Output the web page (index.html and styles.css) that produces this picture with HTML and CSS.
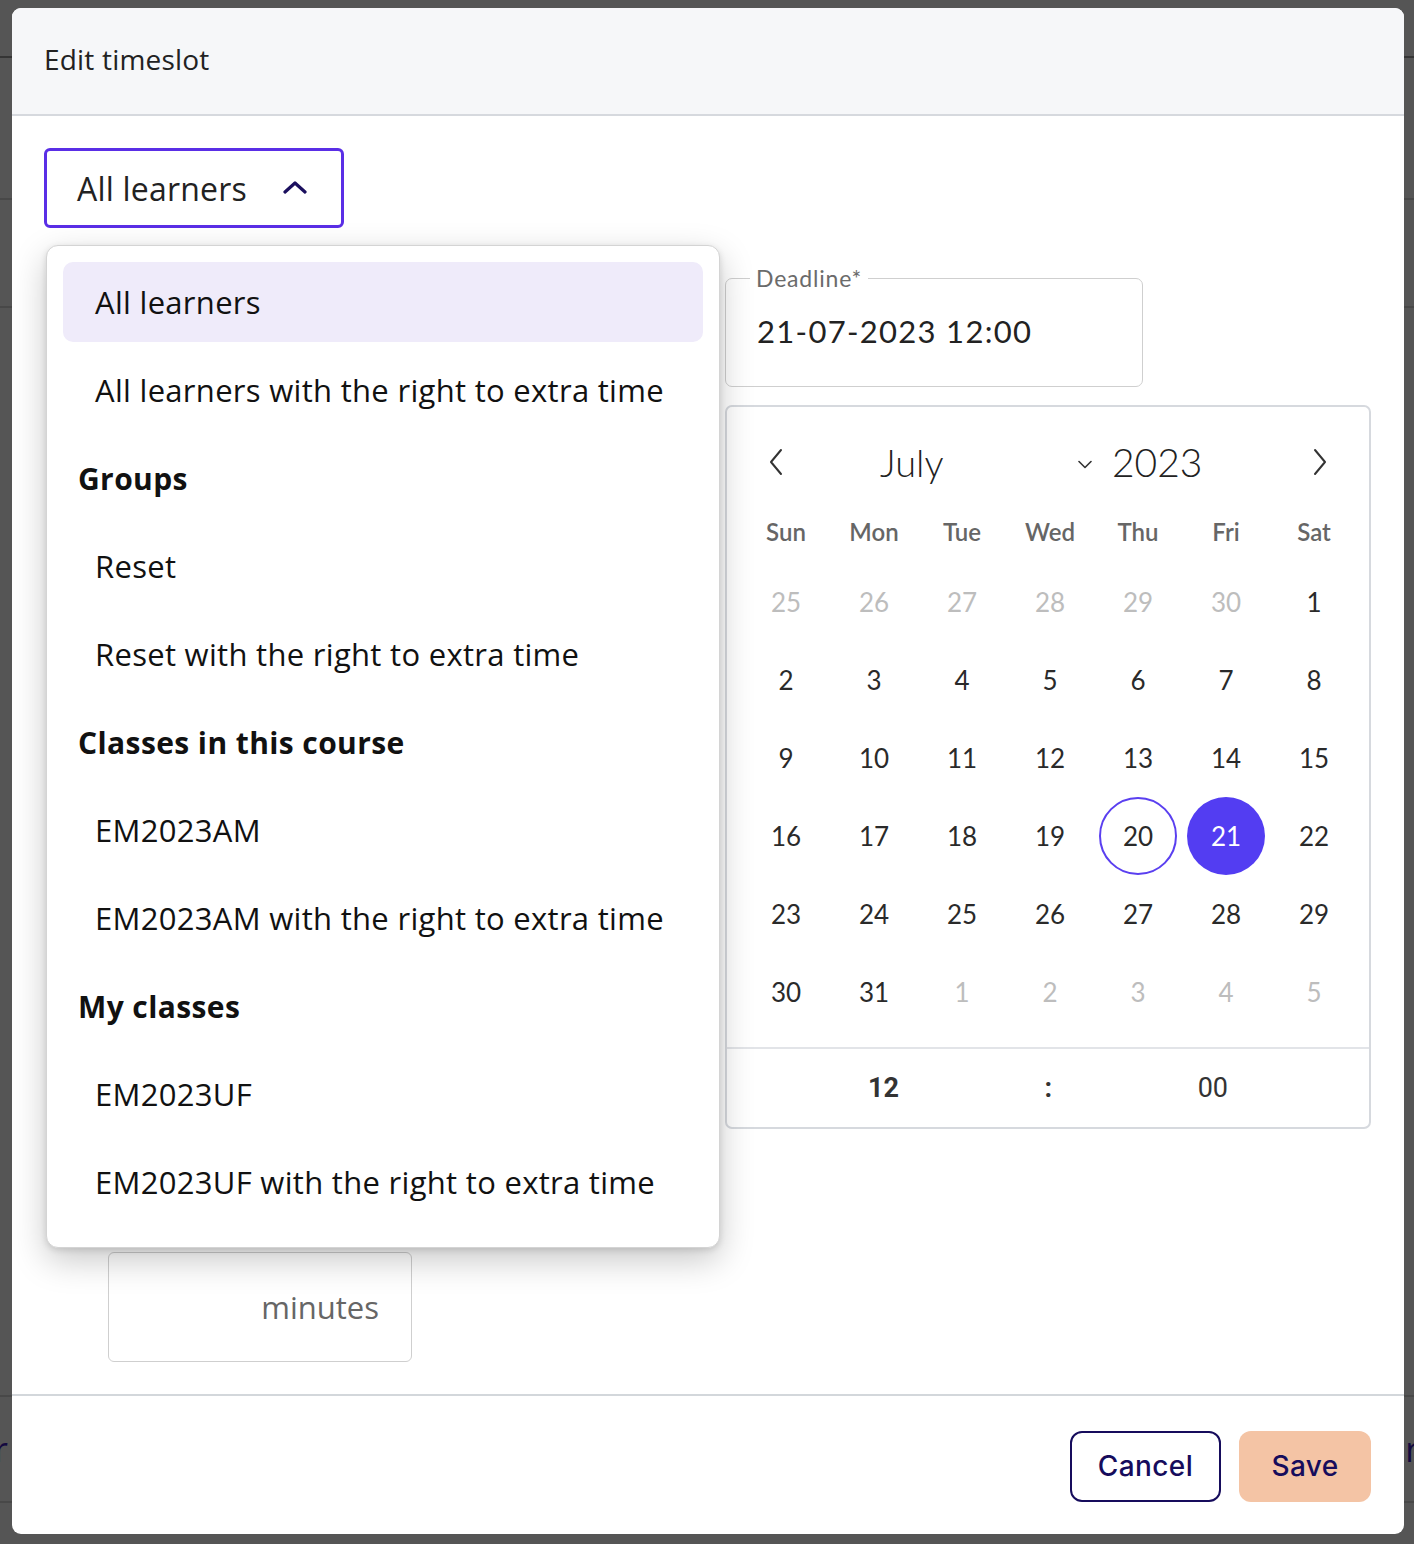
FILE: index.html
```html
<!DOCTYPE html>
<html lang="en">
<head>
<meta charset="utf-8">
<title>Edit timeslot</title>
<link rel="stylesheet" href="styles.css">
</head>
<body>
<div class="backdrop">
  <div class="bg-row bg-a"></div>
  <div class="bg-row bg-b"></div>
  <div class="bg-row bg-c"></div>
  <div class="bg-row bg-d"></div>
  <div class="bg-row bg-e"><span>r</span><span>n</span></div>
</div>

<div class="modal">
  <header class="modal-header">
    <h1>Edit timeslot</h1>
  </header>

  <section class="modal-body">
    <div class="select-wrap">
      <button class="select">
        <span>All learners</span>
        <svg class="chev-up" width="24" height="14" viewBox="0 0 24 14"><path d="M2 12 L12 3 L22 12" fill="none" stroke="#1b0f5e" stroke-width="3.2" stroke-linecap="round" stroke-linejoin="round"/></svg>
      </button>

      <ul class="menu">
        <li class="opt active">All learners</li>
        <li class="opt">All learners with the right to extra time</li>
        <li class="grp">Groups</li>
        <li class="opt">Reset</li>
        <li class="opt">Reset with the right to extra time</li>
        <li class="grp">Classes in this course</li>
        <li class="opt">EM2023AM</li>
        <li class="opt">EM2023AM with the right to extra time</li>
        <li class="grp">My classes</li>
        <li class="opt">EM2023UF</li>
        <li class="opt">EM2023UF with the right to extra time</li>
      </ul>
    </div>

    <div class="fields-row">
      <div class="field-col"></div>
      <div class="deadline-col">
        <fieldset class="outlined">
          <legend>Deadline*</legend>
          <div class="value">21-07-2023 12:00</div>
        </fieldset>

        <div class="calendar">
          <div class="cal-head">
            <svg class="nav" width="16" height="28" viewBox="0 0 16 28"><path d="M13 2 L3 14 L13 26" fill="none" stroke="#333" stroke-width="2" stroke-linecap="round" stroke-linejoin="round"/></svg>
            <div class="month">
              <span>July</span>
              <svg width="14" height="9" viewBox="0 0 14 9"><path d="M1 1.5 L7 7.5 L13 1.5" fill="none" stroke="#333" stroke-width="1.6" stroke-linecap="round" stroke-linejoin="round"/></svg>
            </div>
            <span class="year">2023</span>
            <span class="spacer"></span>
            <svg class="nav" width="16" height="28" viewBox="0 0 16 28"><path d="M3 2 L13 14 L3 26" fill="none" stroke="#333" stroke-width="2" stroke-linecap="round" stroke-linejoin="round"/></svg>
          </div>
          <div class="weekdays">
            <span>Sun</span><span>Mon</span><span>Tue</span><span>Wed</span><span>Thu</span><span>Fri</span><span>Sat</span>
          </div>
          <div class="days">
            <span class="muted">25</span><span class="muted">26</span><span class="muted">27</span><span class="muted">28</span><span class="muted">29</span><span class="muted">30</span><span>1</span>
            <span>2</span><span>3</span><span>4</span><span>5</span><span>6</span><span>7</span><span>8</span>
            <span>9</span><span>10</span><span>11</span><span>12</span><span>13</span><span>14</span><span>15</span>
            <span>16</span><span>17</span><span>18</span><span>19</span><span class="today">20</span><span class="selected">21</span><span>22</span>
            <span>23</span><span>24</span><span>25</span><span>26</span><span>27</span><span>28</span><span>29</span>
            <span>30</span><span>31</span><span class="muted">1</span><span class="muted">2</span><span class="muted">3</span><span class="muted">4</span><span class="muted">5</span>
          </div>
          <div class="time">
            <span class="hh">12</span>
            <span class="sep">:</span>
            <span class="mm">00</span>
          </div>
        </div>
      </div>
    </div>

    <div class="minutes-field">minutes</div>
  </section>

  <footer class="modal-footer">
    <button class="btn btn-outline">Cancel</button>
    <button class="btn btn-fill">Save</button>
  </footer>
</div>
</body>
</html>
```

FILE: styles.css
```css
* { box-sizing: border-box; }

html, body {
  margin: 0;
  padding: 0;
}

body {
  width: 1414px;
  height: 1544px;
  background: #555555;
  font-family: "Open Sans", "Noto Sans", sans-serif;
  color: #222;
  position: relative;
  overflow: hidden;
}

/* background page behind the overlay */
.backdrop {
  display: flex;
  flex-direction: column;
}
.bg-row { border-bottom: 2px solid #484848; }
.bg-a { height: 58px; border-bottom-color: #353535; }
.bg-b { height: 142px; }
.bg-c { height: 108px; }
.bg-d { height: 1089px; }
.bg-e {
  height: 106px;
  display: flex;
  justify-content: space-between;
  align-items: center;
  font-size: 34px;
  color: #14093f;
}
.bg-e span:first-child { margin-left: -6px; }
.bg-e span:last-child { margin-right: -12px; }

/* modal */
.modal {
  position: absolute;
  left: 12px;
  top: 8px;
  width: 1392px;
  height: 1526px;
  background: #fff;
  border-radius: 9px;
  display: flex;
  flex-direction: column;
  overflow: hidden;
}

.modal-header {
  height: 108px;
  background: #f6f7f9;
  border-bottom: 2px solid #d6d9de;
  display: flex;
  align-items: center;
  padding-left: 32px;
  padding-bottom: 4px;
}
.modal-header h1 {
  margin: 0;
  font-size: 28px;
  font-weight: 500;
  color: #222;
  letter-spacing: 0.2px;
}

.modal-body {
  flex: 1;
  padding: 32px 32px 0 32px;
  display: flex;
  flex-direction: column;
}

/* select */
.select-wrap { position: relative; z-index: 5; }

.select {
  width: 300px;
  height: 80px;
  border: 3px solid #5a2ee6;
  border-radius: 6px;
  background: #fff;
  display: flex;
  align-items: center;
  justify-content: space-between;
  padding: 0 34px 0 30px;
  font-family: inherit;
  font-size: 32px;
  letter-spacing: 0.2px;
  color: #222;
  cursor: pointer;
}
.select span { white-space: nowrap; }
.chev-up { margin-top: -2px; }

.menu {
  position: absolute;
  left: 2px;
  top: 97px;
  width: 674px;
  margin: 0;
  padding: 16px 16px 25px 16px;
  list-style: none;
  background: #fff;
  border: 1px solid #d4d4d4;
  border-radius: 12px;
  box-shadow: 0 12px 34px rgba(0, 0, 0, 0.22), 0 2px 6px rgba(0, 0, 0, 0.12);
  display: flex;
  flex-direction: column;
  gap: 8px;
}
.menu li {
  height: 80px;
  display: flex;
  align-items: center;
  white-space: nowrap;
  border-radius: 10px;
}
.opt {
  padding-left: 32px;
  font-size: 31px;
  letter-spacing: 0.3px;
  color: #111;
}
.opt.active { background: #efebfa; }
.grp {
  padding-left: 15px;
  font-size: 30px;
  font-weight: 700;
  letter-spacing: 0.4px;
  color: #111;
}

/* fields */
.fields-row {
  display: flex;
  margin-top: 49px;
}
.field-col { width: 681px; }
.deadline-col { position: relative; }

.outlined {
  width: 418px;
  height: 120px;
  margin: -10px 0 0 0;
  padding: 0 0 0 31px;
  border: 1.5px solid #cfcfcf;
  border-radius: 7px;
}
.outlined legend {
  margin-left: -7px;
  padding: 0 6px 0 6px;
  font-family: "Lato", sans-serif;
  font-size: 23px;
  color: #6b6b6b;
  line-height: 22px;
  letter-spacing: 0.8px;
}
.outlined .value {
  margin-top: 23px;
  font-family: "Lato", sans-serif;
  font-size: 31px;
  color: #222;
  letter-spacing: 1.3px;
}

/* calendar popover */
.calendar {
  position: absolute;
  left: 0;
  top: 128px;
  width: 646px;
  background: #fff;
  border: 2px solid #d6d9de;
  border-radius: 7px;
  padding-top: 25px;
  z-index: 2;
  font-family: "Lato", sans-serif;
}
.cal-head {
  height: 60px;
  display: flex;
  align-items: center;
  padding: 0 41px 0 41px;
}
.month {
  margin-left: 96px;
  width: 212px;
  display: flex;
  align-items: center;
  justify-content: space-between;
  font-size: 38px;
  font-weight: 300;
  color: #222;
}
.month svg { margin-top: 4px; }
.year {
  margin-left: 20px;
  font-size: 39px;
  font-weight: 300;
  color: #222;
}
.spacer { flex: 1; }

.weekdays, .days {
  display: grid;
  grid-template-columns: repeat(7, 88px);
  padding-left: 15px;
}
.weekdays {
  margin-top: 9px;
  height: 60px;
  align-items: center;
}
.weekdays span {
  text-align: center;
  font-size: 24px;
  font-weight: 600;
  color: #666;
}
.days {
  grid-auto-rows: 78px;
  padding-top: 2px;
  padding-bottom: 16px;
}
.days span {
  display: flex;
  align-items: center;
  justify-content: center;
  font-size: 26px;
  color: #2a2a2a;
  width: 78px;
  height: 78px;
  margin-left: 5px;
  border-radius: 50%;
}
.days .muted { color: #bdbdbd; }
.days .today { border: 2px solid #5a3ff0; }
.days .selected { background: #533df2; color: #fff; }

.time {
  height: 80px;
  border-top: 2px solid #e2e4e8;
  display: flex;
  align-items: center;
  font-family: "Roboto", "Liberation Sans", sans-serif;
  font-size: 27px;
  color: #333;
}
.time .hh { width: 172px; text-align: right; font-weight: 700; }
.time .sep { width: 153px; text-align: right; font-weight: 700; }
.time .mm { width: 176px; text-align: right; font-weight: 400; }

/* minutes field */
.minutes-field {
  margin-top: 865px;
  margin-left: 64px;
  width: 304px;
  height: 110px;
  border: 1.5px solid #cfcfcf;
  border-radius: 6px;
  display: flex;
  align-items: center;
  justify-content: flex-end;
  padding-right: 32px;
  font-size: 31px;
  color: #666;
}

/* footer */
.modal-footer {
  height: 140px;
  border-top: 2px solid #d3d7db;
  display: flex;
  align-items: center;
  justify-content: flex-end;
  gap: 18px;
  padding-right: 33px;
  padding-top: 2px;
}
.btn {
  height: 71px;
  border-radius: 12px;
  font-family: "Inter", "Open Sans", sans-serif;
  font-size: 28px;
  font-weight: 500;
  color: #160c5c;
  cursor: pointer;
  letter-spacing: 0.4px;
}
.btn-outline {
  width: 151px;
  background: #fff;
  border: 2px solid #160c5c;
}
.btn-fill {
  width: 132px;
  background: #f4c4a5;
  border: none;
}
```
